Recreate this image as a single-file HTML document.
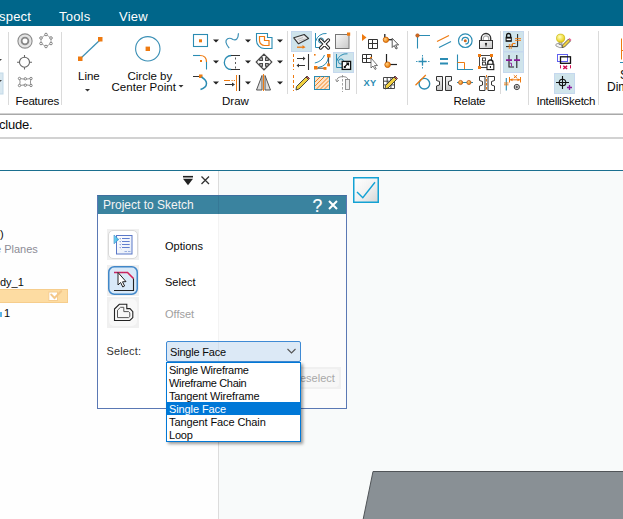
<!DOCTYPE html>
<html><head><meta charset="utf-8">
<style>
*{margin:0;padding:0;box-sizing:border-box}
html,body{width:623px;height:519px;overflow:hidden;background:#fff;font-family:"Liberation Sans",sans-serif;position:relative}
.a{position:absolute}
.t{position:absolute;white-space:nowrap;line-height:1}
svg{position:absolute;overflow:visible}
</style></head><body>
<!-- menu bar -->
<div class="a" style="left:0;top:0;width:623px;height:26px;background:#00668a"></div>
<div class="t" style="left:-1px;top:10px;font-size:13px;letter-spacing:0.2px;color:#fff">spect</div>
<div class="t" style="left:59px;top:10px;font-size:13px;letter-spacing:0.2px;color:#fff">Tools</div>
<div class="t" style="left:119px;top:10px;font-size:13px;letter-spacing:0.2px;color:#fff">View</div>

<!-- ribbon -->
<div class="a" style="left:0;top:26px;width:623px;height:88px;background:#fff"></div>
<div class="a" style="left:0;top:113px;width:623px;height:1px;background:#d2d2d2"></div>
<div class="a" style="left:0;top:114px;width:623px;height:1px;background:#a9a9a9"></div>

<!-- separators -->
<div class="a" style="left:8px;top:32px;width:1px;height:73px;background:#dadada"></div>
<div class="a" style="left:61px;top:32px;width:1px;height:73px;background:#dadada"></div>
<div class="a" style="left:287px;top:31px;width:1px;height:63px;background:#dadada"></div>
<div class="a" style="left:356px;top:31px;width:1px;height:63px;background:#dadada"></div>
<div class="a" style="left:407px;top:31px;width:1px;height:74px;background:#dadada"></div>
<div class="a" style="left:500px;top:31px;width:1px;height:63px;background:#dadada"></div>
<div class="a" style="left:528px;top:31px;width:1px;height:74px;background:#dadada"></div>
<div class="a" style="left:598px;top:31px;width:1px;height:74px;background:#dadada"></div>


<!-- ribbon icons -->
<svg style="left:0;top:0" width="623" height="115" viewBox="0 0 623 115">
<defs>
<linearGradient id="gg" x1="0" y1="0" x2="1" y2="1"><stop offset="0" stop-color="#fafafa"/><stop offset="1" stop-color="#c8c8c8"/></linearGradient>
<radialGradient id="og" cx="0.35" cy="0.35" r="0.7"><stop offset="0" stop-color="#ffd080"/><stop offset="1" stop-color="#e87800"/></radialGradient>
<radialGradient id="yg" cx="0.4" cy="0.35" r="0.7"><stop offset="0" stop-color="#ffffc0"/><stop offset="1" stop-color="#e8c800"/></radialGradient>
</defs>
<!-- left partial -->
<rect x="-1" y="73" width="4" height="21" fill="#d9e8f0" stroke="#c2d9e8"/>
<path d="M0,59 L2,59 L0,61Z" fill="#444"/>
<path d="M0,80 L2,80 L0,82Z" fill="#444"/>
<!-- features -->
<circle cx="25" cy="41" r="7.1" fill="#e4e4e4" stroke="#8c8c8c" stroke-width="1.1"/>
<circle cx="25" cy="41" r="3.4" fill="#fff" stroke="#888" stroke-width="1.8"/>
<path d="M46,34.5 L51,38 L51,43.5 L46,46.5 L41,43.5 L41,38Z" fill="none" stroke="#999" stroke-width="0.8"/>
<g fill="#fff" stroke="#777" stroke-width="0.9">
<circle cx="46" cy="34.5" r="1.3"/><circle cx="51" cy="38" r="1.3"/><circle cx="51" cy="43.5" r="1.3"/><circle cx="46" cy="46.5" r="1.3"/><circle cx="41" cy="43.5" r="1.3"/><circle cx="41" cy="38" r="1.3"/>
</g>
<circle cx="24.5" cy="62.2" r="5" fill="#fff" stroke="#666" stroke-width="1.1"/>
<path d="M24.5,55V57.2M24.5,67.2V69.4M17,62.2H19.5M29.5,62.2H32" stroke="#666" stroke-width="1.1"/>
<path d="M19.5,78.5 Q25.3,80 31,78.5 Q29.8,82 31,85.5 Q25.3,84 19.5,85.5 Q20.7,82 19.5,78.5Z" fill="none" stroke="#888" stroke-width="0.9"/>
<g fill="#fff" stroke="#777" stroke-width="0.9">
<circle cx="19.5" cy="78.5" r="1.2"/><circle cx="25.3" cy="78.8" r="1.2"/><circle cx="31" cy="78.5" r="1.2"/><circle cx="31" cy="85.5" r="1.2"/><circle cx="25.3" cy="85.2" r="1.2"/><circle cx="19.5" cy="85.5" r="1.2"/>
</g>
<!-- Line -->
<path d="M80.5,58.5 L100.5,39.5" stroke="#3a8fb5" stroke-width="1.2"/>
<rect x="78" y="56.5" width="4.5" height="4.5" fill="#ee7a10"/>
<rect x="98" y="37" width="4.5" height="4.5" fill="#ee7a10"/>
<path d="M85,89 L90,89 L87.5,91.5Z" fill="#333"/>
<!-- Circle -->
<circle cx="147.8" cy="48.8" r="12.2" fill="none" stroke="#3a8fb5" stroke-width="1.1"/>
<rect x="145.6" y="46.6" width="4.4" height="4.4" fill="#ee7a10"/>
<path d="M178.5,85 L183.5,85 L181,87.5Z" fill="#333"/>
<!-- dropdown arrows -->
<g fill="#222">
<path d="M213,39.5h6l-3,3z"/><path d="M213,60.5h6l-3,3z"/><path d="M213,81.5h6l-3,3z"/>
<path d="M245,39.5h6l-3,3z"/><path d="M245,60.5h6l-3,3z"/><path d="M245,81.5h6l-3,3z"/>
<path d="M277,39.5h6l-3,3z"/><path d="M277,60.5h6l-3,3z"/><path d="M277,81.5h6l-3,3z"/>
</g>
<!-- draw col1 -->
<rect x="193.5" y="34.5" width="14" height="12" fill="none" stroke="#2b8cb3" stroke-width="1.1"/>
<rect x="199" y="39.3" width="3" height="3" fill="#ee7a10"/>
<path d="M193,55.5H200" stroke="#2b8cb3" stroke-width="1.1"/>
<path d="M200,55.5 Q206.5,55.5 206.5,62" fill="none" stroke="#ee7a10" stroke-width="1.2"/>
<path d="M206.5,62V69.5" stroke="#2b8cb3" stroke-width="1.1"/>
<rect x="200" y="60" width="2" height="2" fill="#ee7a10"/>
<path d="M193,76.5H199" stroke="#333" stroke-width="1"/>
<rect x="199" y="74.5" width="3.5" height="3.5" fill="#ee7a10"/>
<path d="M201.5,77 Q206.5,80 206.5,83.5 Q206.5,87.5 200.5,89.5" fill="none" stroke="#2b8cb3" stroke-width="1.5"/>
<!-- draw col2 -->
<path d="M229.2,48.2 Q223.5,41 227.6,38.7 Q230,37.5 233,39.5 Q238,41.5 238.5,33.2" fill="none" stroke="#3a8fb5" stroke-width="1.2"/>
<path d="M231.3,55.5 A7,7 0 0 0 231.3,69.5" fill="none" stroke="#2b8cb3" stroke-width="1.3"/>
<path d="M231,55.5H240M231,69.5H240" stroke="#333" stroke-width="1"/>
<path d="M235.5,57.5v2M235.5,62v2M235.5,66.5v2" stroke="#444" stroke-width="0.9"/>
<path d="M224,80.5H230M231.5,80.5h1.2M233.8,80.5h1.2" stroke="#ee7a10" stroke-width="1"/>
<path d="M225,84.5H233" stroke="#333" stroke-width="1"/><path d="M232,82.5l3,2 -3,2z" fill="#333"/>
<path d="M236.5,75V91" stroke="#ee7a10" stroke-width="1"/>
<path d="M239.5,75V91" stroke="#222" stroke-width="1.2"/>
<!-- draw col3 -->
<path d="M256.5,33.5H267.5V37.5H272V48.5H264.5 A8,8 0 0 1 256.5,40.5Z" fill="none" stroke="#2b8cb3" stroke-width="1.1"/>
<path d="M259.5,36.5H264.5V40.5H269V45.5H264.5 A5,5 0 0 1 259.5,40.5Z" fill="none" stroke="#ee7a10" stroke-width="1.2"/>
<path d="M264,54.2 L267.8,57.8 H265.6 V60.4 H268.2 V58.2 L271.8,62 L268.2,65.8 V63.6 H265.6 V66.2 H267.8 L264,69.8 L260.2,66.2 H262.4 V63.6 H259.8 V65.8 L256.2,62 L259.8,58.2 V60.4 H262.4 V57.8 H260.2 Z" fill="#fafafa" stroke="#484848" stroke-width="1.2" stroke-linejoin="miter"/>
<path d="M262,75.5 L256.5,90 H262Z" fill="#ddd" stroke="#555" stroke-width="1"/>
<path d="M265,75.5 L270.5,90 H265Z" fill="#ddd" stroke="#555" stroke-width="1"/>
<path d="M263.5,74V91" stroke="#ee7a10" stroke-width="1.1"/>
<!-- highlight boxes -->
<g fill="#cfe4eb" stroke="#c5d8ee" stroke-width="1">
<rect x="291.5" y="31.5" width="20" height="20"/>
<rect x="333.5" y="52.5" width="20" height="20"/>
<rect x="503.5" y="31.5" width="20" height="20"/>
<rect x="503.5" y="52" width="20" height="20.5"/>
<rect x="554.5" y="73.5" width="20" height="20"/>
</g>
<!-- sub2 -->
<path d="M293.8,37.8 L304.2,34.5 L308.6,38.5 L298.5,43.8Z" fill="#e8e8e8" stroke="#333" stroke-width="1.1" stroke-linejoin="round"/>
<path d="M297.5,39.5 L303,37.5 M299,41 L305.5,38.8" stroke="#aaa" stroke-width="0.7"/>
<path d="M297,47.2 H303.5" stroke="#ee7a10" stroke-width="1.3"/>
<path d="M302.5,45 L305.5,47.2 L302.5,48.8Z" fill="#ee7a10"/>
<path d="M315.5,33V47.5H322" fill="none" stroke="#2b8cb3" stroke-width="1"/>
<path d="M315.8,41 A10,10 0 0 1 326.5,33.5" fill="none" stroke="#2b8cb3" stroke-width="1"/>
<circle cx="321" cy="40.5" r="2.6" fill="none" stroke="#2b8cb3" stroke-width="1"/>
<path d="M320.6,40 L328.4,48 M328.4,40 L320.6,48" stroke="#222" stroke-width="3.4" stroke-linecap="round"/>
<path d="M320.6,40 L328.4,48 M328.4,40 L320.6,48" stroke="#fff" stroke-width="1.4" stroke-linecap="round"/>
<rect x="335.5" y="34.5" width="13.5" height="14" fill="url(#gg)" stroke="#777" stroke-width="1"/>
<rect x="347" y="32.5" width="3.2" height="3.2" fill="#ee7a10"/>
<path d="M293.5,54v16" stroke="#ee7a10" stroke-width="1" stroke-dasharray="3,2"/>
<path d="M297,58.5H304M298,65.5H305" stroke="#333" stroke-width="1"/>
<path d="M303,56.5l2.5,2-2.5,2z M299,63.5l-2.5,2 2.5,2z" fill="#333"/>
<path d="M308.5,54V70" stroke="#333" stroke-width="1.1"/>
<path d="M314.8,63 Q322,61.5 324.5,55" fill="none" stroke="#2b8cb3" stroke-width="1"/>
<path d="M318,67.5 Q327.5,66 328.5,57" fill="none" stroke="#2b8cb3" stroke-width="1"/>
<path d="M316,68.2H325.5M328.6,56V64.5" fill="none" stroke="#333" stroke-width="0.9"/>
<rect x="314" y="66" width="3.5" height="3.5" fill="#ee7a10"/><rect x="323.5" y="67" width="3" height="2.8" fill="#ee7a10"/>
<rect x="327" y="54" width="3.5" height="3.5" fill="#ee7a10"/><rect x="327.2" y="63.5" width="2.8" height="2.8" fill="#ee7a10"/>
<rect x="314" y="54" width="1.6" height="1.6" fill="#ee7a10"/>
<path d="M336.5,54V67.5H342" fill="none" stroke="#2b8cb3" stroke-width="1"/>
<path d="M336.8,61 A10,10 0 0 1 347.5,53.8" fill="none" stroke="#2b8cb3" stroke-width="1"/>
<circle cx="341" cy="61.5" r="2.6" fill="none" stroke="#2b8cb3" stroke-width="1"/>
<rect x="342.2" y="61.4" width="8.4" height="8" fill="#fff" stroke="#111" stroke-width="1.3"/>
<path d="M345,66.5 L348.5,63M346,63H348.5V65.5" fill="none" stroke="#111" stroke-width="1.1"/>
<rect x="343.8" y="66" width="2" height="2" fill="#111"/>
<path d="M293.5,75v16" stroke="#ee7a10" stroke-width="1" stroke-dasharray="3,2"/>
<path d="M296,90 L296.5,86.5 L306,77 L308.5,79.5 L299,89Z" fill="#f0d040" stroke="#333" stroke-width="0.9"/>
<path d="M306,77 L307,76 L309.5,78.5 L308.5,79.5Z" fill="#e05050" stroke="#333" stroke-width="0.8"/>
<rect x="314.5" y="76.5" width="15" height="13" fill="#fde3c8" stroke="#2b8cb3" stroke-width="1"/>
<path d="M315,82 L320.5,76.5M315,86 L324.5,76.5M316.5,89 L329,76.5M320.5,89 L329,80.5M324.5,89 L329,84.5" stroke="#ee7a10" stroke-width="0.9"/>
<path d="M342.5,75v17" stroke="#999" stroke-width="0.9" stroke-dasharray="2.5,1.5"/>
<path d="M337,81 Q336,77 343,76.5 Q347,76.5 348,79" fill="none" stroke="#888" stroke-width="0.9"/>
<path d="M335.5,79.5 L337,82 L339,80" fill="none" stroke="#888" stroke-width="0.9"/>
<rect x="345.5" y="79.5" width="4" height="10" fill="#eee" stroke="#888" stroke-width="0.9"/>
<!-- sub3 -->
<path d="M362,34 L366.5,37.5 L362,41Z" fill="#ee7a10"/>
<path d="M368.5,39.5h9v9h-9z M372.5,39.5v9 M368.5,43.5h9" fill="none" stroke="#333" stroke-width="1"/>
<path d="M384.8,34V38" stroke="#222" stroke-width="1.3"/>
<path d="M388,39.7H392" stroke="#222" stroke-width="1.3"/>
<circle cx="385.9" cy="39.8" r="2.7" fill="url(#og)" stroke="#c85a00" stroke-width="0.8"/>
<path d="M392.2,38.3 V47.5 L394.2,45.5 L396,49 L397.3,48.3 L395.6,44.9 L398.6,44.9Z" fill="#fff" stroke="#444" stroke-width="0.9"/>
<path d="M362.5,54.5h9v8h-9z M366.5,54.5v8 M362.5,58.5h9" fill="none" stroke="#333" stroke-width="1"/>
<circle cx="371" cy="58" r="1.2" fill="#ee7a10"/>
<path d="M371,58 V68 L373,66 L375,69.5 L376.2,68.8 L374.5,65.5 L377.5,65.5Z" fill="#fff" stroke="#555" stroke-width="0.8"/>
<path d="M386.5,54V63" stroke="#222" stroke-width="1.2"/>
<path d="M388,64.5H397" stroke="#222" stroke-width="1.2"/>
<circle cx="387.6" cy="64.7" r="2.8" fill="url(#og)" stroke="#c85a00" stroke-width="0.8"/>
<text x="363.6" y="86" font-family="Liberation Sans" font-weight="bold" font-size="9.3" letter-spacing="0.3" fill="#2b8cb3">XY</text>
<path d="M383.5,77.5h11v11h-11z M387.2,77.5v11 M390.9,77.5v11 M383.5,81.2h11 M383.5,84.9h11" fill="none" stroke="#333" stroke-width="0.9"/>
<path d="M385,89 L385.5,85.5 L394,77 L396.5,79.5 L388,88Z" fill="#f0d040" stroke="#333" stroke-width="0.9"/>
<path d="M394,77 L395,76 L397.5,78.5 L396.5,79.5Z" fill="#e05050" stroke="#333" stroke-width="0.8"/>
<!-- relate col1-4 -->
<path d="M417.5,48.5V35.5H430" fill="none" stroke="#2b8cb3" stroke-width="1.1"/>
<circle cx="417.5" cy="35.5" r="1.8" fill="#d06820" stroke="#b05010" stroke-width="0.5"/>
<path d="M437,41.5 L449,35.5" stroke="#ee7a10" stroke-width="1.1"/>
<path d="M439,47.5 L451,41.5" stroke="#2b8cb3" stroke-width="1.1"/>
<circle cx="465.3" cy="40.7" r="6.8" fill="none" stroke="#2b8cb3" stroke-width="1.2"/>
<path d="M462,40.7 A3.3,3.3 0 1 1 465.3,44" fill="none" stroke="#2b8cb3" stroke-width="1.2"/>
<circle cx="465.3" cy="40.7" r="1.5" fill="#d06820"/>
<path d="M481.3,40V38.2 A4.7,4.7 0 0 1 490.7,38.2V40" fill="none" stroke="#333" stroke-width="1.3"/>
<path d="M483.3,40V38.5 A2.7,2.7 0 0 1 488.7,38.5V40" fill="none" stroke="#aaa" stroke-width="1.2"/>
<rect x="479.5" y="40.5" width="13" height="8" fill="url(#gg)" stroke="#333" stroke-width="1"/>
<circle cx="486" cy="43.8" r="1.1" fill="#222"/><path d="M486,44v2.5" stroke="#222" stroke-width="1"/>
<path d="M416,61.5h1.5M419,61.5h1.5M425,61.5h1.5M428,61.5h1.5 M422.5,55v1.5M422.5,58v1.5M422.5,64v1.5M422.5,67v1.5" stroke="#2b8cb3" stroke-width="0.9"/>
<path d="M418.5,61.5H426.5M422.5,57.5V65.5" stroke="#2b8cb3" stroke-width="1.3"/>
<path d="M440,59H448M440,63.5H448" stroke="#2b8cb3" stroke-width="1.8"/>
<path d="M457.5,54.5V69.5H473" fill="none" stroke="#2b8cb3" stroke-width="1.1"/>
<path d="M457.5,62.5H464.5V69" fill="none" stroke="#ee7a10" stroke-width="1"/>
<rect x="479.5" y="55.5" width="12" height="12" fill="#fff" stroke="#333" stroke-width="0.9"/>
<rect x="482.5" y="58" width="3" height="2.8" fill="#fff" stroke="#333" stroke-width="0.9"/><rect x="482.5" y="62.2" width="3" height="2.8" fill="#fff" stroke="#333" stroke-width="0.9"/>
<rect x="478" y="54" width="3" height="3" fill="#ee7a10"/><rect x="490" y="54" width="3" height="3" fill="#ee7a10"/><rect x="478" y="66" width="3" height="3" fill="#ee7a10"/>
<path d="M487.8,64.2V62.6 A2.6,2.6 0 0 1 493,62.6V64.2" fill="#fff" stroke="#222" stroke-width="1.4"/>
<rect x="487" y="64.3" width="6.8" height="5.3" fill="#fff" stroke="#222" stroke-width="1.1"/>
<rect x="489.9" y="66" width="1.1" height="2" fill="#222"/>
<circle cx="424.4" cy="83.7" r="5.3" fill="none" stroke="#2b8cb3" stroke-width="1.4"/>
<path d="M415.5,85.2 L425.8,75" stroke="#ee7a10" stroke-width="1.2"/>
<defs><linearGradient id="bg2" x1="0" y1="0" x2="0" y2="1"><stop offset="0" stop-color="#f4f4f4"/><stop offset="1" stop-color="#c4c4c4"/></linearGradient></defs>
<path d="M436.5,76.5H442.5V90.5H436.5V86L439.5,85V81.5L436.5,80.5Z" fill="url(#bg2)" stroke="#333" stroke-width="1"/>
<path d="M451.5,76.5H445.5V90.5H451.5V86L448.5,85V81.5L451.5,80.5Z" fill="url(#bg2)" stroke="#333" stroke-width="1"/>
<path d="M457,82.5H473" stroke="#2b8cb3" stroke-width="1"/>
<circle cx="460.6" cy="82.5" r="2.1" fill="url(#og)" stroke="#b05010" stroke-width="0.7"/>
<circle cx="468.9" cy="82.5" r="2.1" fill="url(#og)" stroke="#b05010" stroke-width="0.7"/>
<path d="M479.5,76.5H485V90.5H479.5V86L482.5,85V81.5L479.5,80.5Z" fill="#fff" stroke="#333" stroke-width="1"/>
<path d="M494.5,76.5H488V90.5H494.5V86L491.5,85V81.5L494.5,80.5Z" fill="#fff" stroke="#333" stroke-width="1"/>
<path d="M486.5,75v16" stroke="#ee7a10" stroke-width="1" stroke-dasharray="2.5,1.5"/>
<!-- relate col5 -->
<path d="M506.6,37V35.5 A2,2 0 0 1 510.6,35.5V37" fill="none" stroke="#111" stroke-width="1.3"/>
<rect x="505.6" y="36.8" width="6.2" height="5" fill="#111"/>
<rect x="506.6" y="38.6" width="4.2" height="1.6" fill="#fff"/>
<path d="M517.6,34V46.6H506" fill="none" stroke="#222" stroke-width="1"/>
<path d="M515,38.6h6M515,40.4h6" stroke="#ee7a10" stroke-width="0.9"/>
<path d="M512.5,46V43.5H515.5" fill="none" stroke="#ee7a10" stroke-width="1"/>
<path d="M509.3,44v5M511.2,44v5" stroke="#ee7a10" stroke-width="0.9"/>
<path d="M509,55V67H514M516.8,55V68" fill="none" stroke="#222" stroke-width="1.1"/>
<path d="M506,60.2h6M514,60.2h6" stroke="#8a1a9a" stroke-width="1.7"/>
<path d="M509.5,63.2H511.5V66.5" fill="none" stroke="#8a1a9a" stroke-width="0.9"/>
<path d="M506.3,78V90.5" stroke="#2b8cb3" stroke-width="1.1"/>
<path d="M504,83h4.5M504,84.8h4.5" stroke="#ee7a10" stroke-width="0.9"/>
<path d="M509.5,79.8H520.5M509.5,77v5.5M520.5,77v5.5" stroke="#ee7a10" stroke-width="1"/>
<path d="M512.5,78.3l-2.5,1.5 2.5,1.5zM517.5,78.3l2.5,1.5-2.5,1.5z" fill="#ee7a10"/>
<path d="M513.8,75.2l3.2,3M517,75.2l-3.2,3" stroke="#ee7a10" stroke-width="1"/>
<circle cx="516.8" cy="87" r="2.6" fill="#fff" stroke="#333" stroke-width="1"/>
<path d="M515.3,87h3M516.8,85.5v3" stroke="#333" stroke-width="0.9"/>
<!-- intellisketch -->
<path d="M556,46 Q555,43.5 558.5,43.5 Q561,44 563,47.5 Q560,48.5 556,46Z" fill="#f4f4f4" stroke="#888" stroke-width="0.8"/>
<path d="M559,41.5v3h3v-3" fill="#bbb" stroke="#777" stroke-width="0.6"/>
<circle cx="560.6" cy="38.2" r="4.1" fill="url(#yg)" stroke="#c0b000" stroke-width="0.6"/>
<path d="M562,47.5 L562.5,45 L568.5,39 L570.5,41 L564.5,47Z" fill="#f0d040" stroke="#444" stroke-width="0.8"/>
<path d="M568.5,39 L569.5,38 L571.5,40 L570.5,41Z" fill="#e86090"/>
<rect x="557.5" y="54.5" width="10" height="7" fill="none" stroke="#6060f0" stroke-width="1"/>
<rect x="560.5" y="56.8" width="10" height="6.5" fill="none" stroke="#111" stroke-width="1.3"/>
<path d="M560.5,65.2v3.2M570.5,65.2v3.2" stroke="#d01050" stroke-width="1"/>
<path d="M563.3,65.8l3.8,3.2M567.1,65.8l-3.8,3.2" stroke="#d01050" stroke-width="1.5"/>
<path d="M556,82.5H569M562.5,76V89" stroke="#111" stroke-width="1.1"/>
<circle cx="562.5" cy="82.5" r="3.3" fill="none" stroke="#111" stroke-width="1.1"/>
<path d="M567,87.5h5M569.5,85v5" stroke="#8a1a9a" stroke-width="1.3"/>
<!-- right partial -->
<path d="M621.5,38.5V59.5 M622,50.5H624" stroke="#ee7a10" stroke-width="1"/>
<path d="M620,62.5H623" stroke="#2b8cb3" stroke-width="1"/>
</svg>
<div class="t" style="left:78px;top:71px;font-size:11.5px;color:#0a0a0a">Line</div>
<div class="t" style="left:127.5px;top:71px;font-size:11.5px;color:#0a0a0a">Circle by</div>
<div class="t" style="left:111.5px;top:82px;font-size:11.5px;letter-spacing:0.05px;color:#0a0a0a">Center Point</div>
<div class="t" style="left:620px;top:69px;font-size:12px;color:#0a0a0a">S</div>
<div class="t" style="left:607px;top:81px;font-size:12px;color:#0a0a0a">Dim</div>

<!-- group labels -->
<div class="t" style="left:15.5px;top:96px;font-size:11.5px;letter-spacing:-0.25px;color:#0a0a0a">Features</div>
<div class="t" style="left:222px;top:96px;font-size:11.5px;color:#0a0a0a">Draw</div>
<div class="t" style="left:453.5px;top:96px;font-size:11.5px;letter-spacing:-0.25px;color:#0a0a0a">Relate</div>
<div class="t" style="left:536.5px;top:96px;font-size:11.5px;letter-spacing:-0.25px;color:#0a0a0a">IntelliSketch</div>

<!-- cue line -->
<div class="t" style="left:-1px;top:118px;font-size:13px;letter-spacing:-0.2px;color:#0a0a0a">clude.</div>
<div class="a" style="left:0;top:137px;width:623px;height:2px;background:#d2d2d2"></div>
<div class="a" style="left:0;top:170px;width:623px;height:1px;background:#1b6f8f"></div>

<!-- navigator panel -->
<div class="a" style="left:0;top:171px;width:218px;height:348px;background:#fefefe"></div>
<div class="a" style="left:218px;top:171px;width:1px;height:348px;background:#dcdcdc"></div>
<div class="a" style="left:219px;top:171px;width:404px;height:348px;background:#f8fafa"></div>

<!-- graphics parallelogram -->
<svg style="left:0;top:0" width="623" height="519"><polygon points="373,471.5 624,471.5 624,522 362.6,522" fill="#899095" stroke="#505458" stroke-width="1"/></svg>


<!-- navigator panel content -->
<svg style="left:180px;top:172px" width="36" height="18">
<path d="M3,4.7H13" stroke="#222" stroke-width="1.6"/>
<path d="M3,6.8H13L8,13.2Z" fill="#222"/>
<path d="M21.5,4.5L29,12M29,4.5L21.5,12" stroke="#333" stroke-width="1.3"/>
</svg>
<div class="t" style="left:-6px;top:229px;font-size:11px;color:#0a0a0a">0)</div>
<div class="t" style="left:-5px;top:244px;font-size:11px;color:#8c8c96">e Planes</div>
<div class="t" style="left:0px;top:277px;font-size:11px;color:#0a0a0a">dy_1</div>
<div class="a" style="left:-1px;top:289px;width:69px;height:14px;background:#fddca2;border:1px solid #f6cd8c"></div>
<svg style="left:48px;top:290px" width="16" height="12">
<rect x="0.8" y="2" width="8.7" height="8.5" fill="#fff" stroke="#f5cd90" stroke-width="1"/>
<path d="M3.3,4.6 L6.5,8 L13.2,1.2" fill="none" stroke="#f4c88a" stroke-width="2.1" stroke-linecap="round"/>
</svg>
<div class="a" style="left:0;top:312px;width:2px;height:5px;background:#5ab4e6"></div>
<div class="t" style="left:4px;top:308px;font-size:11px;color:#0a0a0a">1</div>

<!-- view checkbox -->
<svg style="left:352px;top:176px" width="28" height="28">
<defs><linearGradient id="cbg" x1="0" y1="0" x2="1" y2="1"><stop offset="0" stop-color="#ffffff"/><stop offset="0.5" stop-color="#f2f2f2"/><stop offset="1" stop-color="#d6d6d6"/></linearGradient></defs>
<rect x="1.75" y="1.75" width="24.5" height="24.5" fill="url(#cbg)" stroke="#14a2d4" stroke-width="1.5"/>
<path d="M5,16 L10.8,21.8 L23,6.2" fill="none" stroke="#14a2d4" stroke-width="1.4"/>
</svg>

<!-- dialog -->
<div class="a" style="left:97px;top:195px;width:250px;height:214px;background:#fff;border:1px solid #5a78b4;border-top-color:#3f6e9e"></div>
<div class="a" style="left:98px;top:196px;width:248px;height:18px;background:#3a839f"></div>
<div class="a" style="left:219px;top:214px;width:127px;height:194px;background:#fcfcfc"></div>
<div class="a" style="left:218px;top:214px;width:1px;height:194px;background:#f3f3f3"></div>
<div class="a" style="left:218px;top:196px;width:1px;height:18px;background:#367896"></div>
<div class="t" style="left:103px;top:199px;font-size:12px;color:#f4f4f4">Project to Sketch</div>
<div class="t" style="left:312.5px;top:198px;font-size:17.5px;color:#fff;-webkit-text-stroke:0.2px #fff">?</div>
<svg style="left:328px;top:200px" width="11" height="10"><path d="M1,1L9,9M9,1L1,9" stroke="#fff" stroke-width="2"/></svg>

<!-- option buttons -->
<div class="a" style="left:107px;top:229px;width:32px;height:31px;background:#f0f0f0"></div>
<div class="a" style="left:108px;top:230px;width:30px;height:29px;background:#fff;border:1px solid #d9d9d9;border-radius:5px"></div>
<svg style="left:107px;top:229px" width="32" height="31">
<defs><linearGradient id="docg" x1="0" y1="0" x2="1" y2="1"><stop offset="0" stop-color="#ffffff"/><stop offset="1" stop-color="#e4ebf8"/></linearGradient>
<linearGradient id="trg" x1="0" y1="0" x2="1" y2="0"><stop offset="0" stop-color="#7fd8f8"/><stop offset="1" stop-color="#2aa8d8"/></linearGradient></defs>
<rect x="9.5" y="6.5" width="15.5" height="18.5" fill="url(#docg)" stroke="#5a78c8" stroke-width="1"/>
<path d="M15,9.5H22.7M15,12.5H22.7M15,15.5H22.7M15,18.5H22.7" stroke="#5070c8" stroke-width="0.9"/>
<path d="M12.5,9.5h1.5M12.5,12.5h1.5M12.5,15.5h1.5M12.5,18.5h1.5" stroke="#90a4dc" stroke-width="0.9"/>
<path d="M13.5,10.5l1,1M13.5,13.5l1,1M13.5,16.5l1,1M13.5,19.5l1,1" stroke="#b0c0e8" stroke-width="0.7"/>
<path d="M7,6 L11.8,10.4 L7,14.8Z" fill="url(#trg)" stroke="#3a8ac8" stroke-width="0.6"/>
<path d="M17.5,22.5h2.5M21,22.5h2.5" stroke="#9ab0e0" stroke-width="1"/>
</svg>
<div class="a" style="left:107px;top:265px;width:32px;height:31px;background:#f0f0f0"></div>

<svg style="left:107px;top:265px" width="32" height="31">
<rect x="1.75" y="1.75" width="28.5" height="27.5" rx="5.5" fill="#d9e9f8" stroke="#4187c8" stroke-width="1.5"/>
<path d="M7,7.5H20.5L26.5,13.5" fill="none" stroke="#e8204a" stroke-width="1.6"/>
<path d="M7,7.5H20.5L26.5,13.5" fill="none" stroke="#7030a0" stroke-width="0.6" stroke-dasharray="1,1"/>
<path d="M26.5,13.5V25.5H7" fill="none" stroke="#222" stroke-width="1.1"/>
<path d="M11,7.5 V20 L13.6,17.5 L15.8,22 L17.6,21 L15.5,16.8 L19,16.6Z" fill="#fff" stroke="#222" stroke-width="1"/>
</svg>
<div class="a" style="left:107px;top:297px;width:32px;height:31px;background:#f0f0f0"></div>
<div class="a" style="left:109px;top:299px;width:28px;height:27px;background:#f8f8f8;border-radius:5px"></div>
<svg style="left:107px;top:297px" width="32" height="31">
<path d="M7.5,12 L12.3,7.3 H19.8 V11.6 H23 L25.8,14.6 V20.6 L22.8,23.5 H7.5Z" fill="none" stroke="#222" stroke-width="1.1"/>
<path d="M10.5,13.2 L13.5,10.3 H16.8 V14.6 H21.6 L22.8,15.8 V19.6 L21.6,20.6 H10.5Z" fill="none" stroke="#444" stroke-width="0.9"/>
</svg>
<div class="t" style="left:165px;top:241px;font-size:11px;color:#0a0a0a">Options</div>
<div class="t" style="left:165px;top:277px;font-size:11px;color:#0a0a0a">Select</div>
<div class="t" style="left:165px;top:309px;font-size:11px;color:#a0a0a0">Offset</div>

<!-- select row -->
<div class="t" style="left:106.5px;top:346px;font-size:11px;letter-spacing:0.15px;color:#333">Select:</div>
<div class="a" style="left:280px;top:367px;width:61px;height:22px;background:#f0f0f0"></div>
<div class="a" style="left:282px;top:369px;width:57px;height:18px;background:#f7f7f7;border-radius:4px"></div>
<div class="t" style="left:300px;top:373px;font-size:11px;color:#a8a8a8">eselect</div>
<div class="a" style="left:166px;top:341px;width:135px;height:21px;background:#dce9f6;border:1px solid #3f8ad4;border-radius:2px"></div>
<div class="a" style="left:218px;top:342px;width:1px;height:19px;background:rgba(0,0,0,0.04)"></div>
<div class="t" style="left:170px;top:347px;font-size:11px;letter-spacing:-0.2px;color:#0a0a0a">Single Face</div>
<svg style="left:286px;top:347px" width="12" height="9"><path d="M1.5,2 L5.5,6 L9.5,2" fill="none" stroke="#555" stroke-width="1.1"/></svg>

<!-- dropdown list -->
<div class="a" style="left:166px;top:362px;width:135px;height:80px;background:#fff;border:1px solid #0078d7;box-shadow:2px 2px 3px rgba(0,0,0,0.4)"></div>
<div class="a" style="left:167px;top:402px;width:133px;height:13px;background:#0078d7"></div>
<div class="t" style="left:169px;top:365px;font-size:11px;letter-spacing:-0.3px;color:#0a0a0a">Single Wireframe</div>
<div class="t" style="left:169px;top:378px;font-size:11px;letter-spacing:-0.35px;color:#0a0a0a">Wireframe Chain</div>
<div class="t" style="left:169px;top:391px;font-size:11px;letter-spacing:-0.15px;color:#0a0a0a">Tangent Wireframe</div>
<div class="t" style="left:169px;top:404px;font-size:11px;letter-spacing:-0.1px;color:#fff">Single Face</div>
<div class="t" style="left:169px;top:417px;font-size:11px;letter-spacing:-0.1px;color:#0a0a0a">Tangent Face Chain</div>
<div class="t" style="left:169px;top:430px;font-size:11px;letter-spacing:-0.2px;color:#0a0a0a">Loop</div>
</body></html>
